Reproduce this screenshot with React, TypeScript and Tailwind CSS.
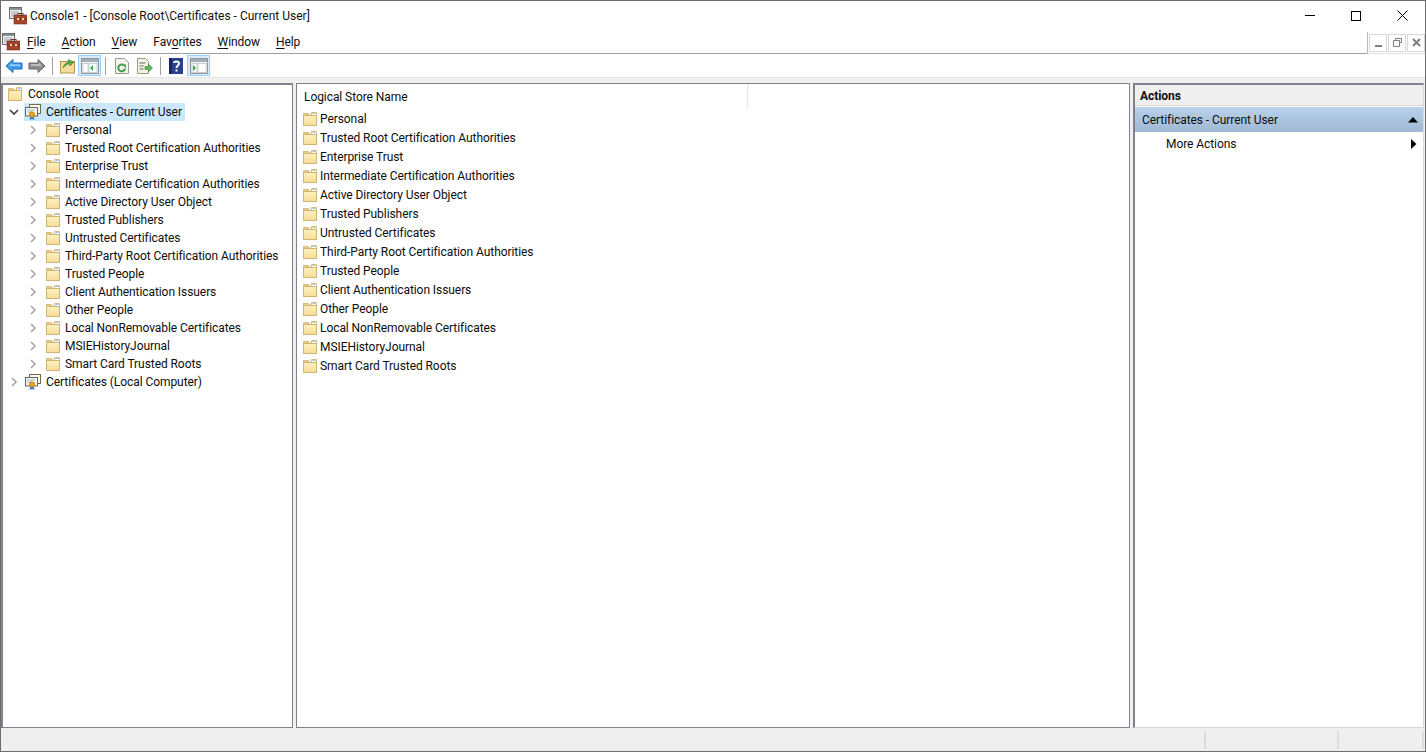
import React from 'react';

const stores = [
  'Personal',
  'Trusted Root Certification Authorities',
  'Enterprise Trust',
  'Intermediate Certification Authorities',
  'Active Directory User Object',
  'Trusted Publishers',
  'Untrusted Certificates',
  'Third-Party Root Certification Authorities',
  'Trusted People',
  'Client Authentication Issuers',
  'Other People',
  'Local NonRemovable Certificates',
  'MSIEHistoryJournal',
  'Smart Card Trusted Roots',
];

const FolderIcon = () => (
  <svg width="16" height="16" viewBox="0 0 16 16" className="shrink-0">
    <defs>
      <linearGradient id="folderBody" x1="0" y1="0" x2="0" y2="1">
        <stop offset="0" stopColor="#fdf0c4" />
        <stop offset="1" stopColor="#f6dc96" />
      </linearGradient>
    </defs>
    <path d="M1.500 4V2.500h5L7.500 4z" fill="#f4dd9f" stroke="#d8bd7c" />
    <path d="M9.500 1.500h5v3h-5z" fill="#fff" stroke="#d8bd7c" />
    <path d="M10.500 2.500h3" stroke="#9cc4e8" />
    <rect x="1.500" y="4.500" width="13" height="10" fill="url(#folderBody)" stroke="#d2b574" />
  </svg>
);

const CertIcon = () => (
  <svg width="18" height="18" viewBox="0 0 18 18" className="shrink-0">
    <rect x="5.500" y="1.500" width="11" height="9" fill="#fbfbf2" stroke="#6f6a4e" />
    <rect x="1.500" y="4.500" width="12" height="8.500" fill="#f8f8ee" stroke="#5f6468" />
    <path d="M3 7h8M3 9h5" stroke="#a8b6c2" />
    <path d="M6.500 13l-1 4 2.500-1 2.500 1-1-4z" fill="#2f7fd4" />
    <circle cx="8" cy="11.500" r="2.700" fill="#eda322" stroke="#b4720f" strokeWidth="0.7" />
  </svg>
);

const Chevron = ({ open = false }: { open?: boolean }) => (
  <svg width="10" height="10" viewBox="0 0 10 10" className="shrink-0">
    {open ? (
      <path d="M1 3l4 4 4-4" fill="none" stroke="#404040" strokeWidth="1.6" />
    ) : (
      <path d="M3 1l4 4-4 4" fill="none" stroke="#a6a6a6" strokeWidth="1.6" />
    )}
  </svg>
);

const ConsoleIcon = () => (
  <svg width="18" height="18" viewBox="0 0 18 18" className="shrink-0">
    <rect x="0.500" y="0.500" width="12" height="11" fill="#eef0f2" stroke="#6a6a6a" />
    <rect x="1" y="1" width="11" height="2" fill="#8a8f96" />
    <path d="M2 5h8M2 7h8M2 9h4" stroke="#a0a6ad" />
    <rect x="5" y="8" width="13" height="9" fill="#a8432a" stroke="#70301f" strokeWidth="0.6" />
    <rect x="9" y="6.500" width="5" height="2" fill="none" stroke="#70301f" />
    <path d="M5 12h13" stroke="#70301f" />
    <path d="M8 11h2v2H8zM13 11h2v2h-2z" fill="#f0d8b0" />
  </svg>
);

const BackIcon = () => (
  <svg width="18" height="16" viewBox="0 0 18 16">
    <path d="M1 8l7-6.500V5h9v6H8v3.500z" fill="#3d9bea" stroke="#1f6fc0" />
    <path d="M4 8l3-3v1.500h8V8z" fill="#9ed2f8" />
  </svg>
);

const ForwardIcon = () => (
  <svg width="18" height="16" viewBox="0 0 18 16">
    <path d="M17 8l-7-6.500V5H1v6h9v3.500z" fill="#8c8c8c" stroke="#666" />
    <path d="M3 6h8V4.500L14 8H3z" fill="#bdbdbd" />
  </svg>
);

const UpIcon = () => (
  <svg width="16" height="16" viewBox="0 0 16 16">
    <rect x="0.500" y="3.500" width="14" height="11.500" fill="#f4dc9c" stroke="#b39450" />
    <path d="M3 10C4 6 7 4 9 4L8 1.500l6 2.500-4 4-.5-2.500C7 6 5 8 3 10z" fill="#5aa84a" stroke="#3c7e34" strokeWidth="0.6" />
  </svg>
);

const PaneIcon = ({ right = false }: { right?: boolean }) => (
  <svg width="18" height="16" viewBox="0 0 18 16">
    <rect x="0.500" y="0.500" width="17" height="15" fill="#f4f6f8" stroke="#8f98a0" />
    <rect x="1" y="1" width="16" height="3" fill="#a3adb6" />
    <rect x="2" y="5.500" width="5" height="9" fill="#fff" stroke="#b4bac0" strokeWidth="0.7" />
    <rect x="8" y="5.500" width="8" height="9" fill="#fff" stroke="#b4bac0" strokeWidth="0.7" />
    {right ? <path d="M3 7l3 3-3 3z" fill="#3aa545" /> : <path d="M12 7l-3 3 3 3z" fill="#3aa545" />}
  </svg>
);

const RefreshIcon = () => (
  <svg width="14" height="16" viewBox="0 0 14 16">
    <path d="M.5.5h9l4 4v11H.5z" fill="#f4f4ee" stroke="#9a9a90" />
    <path d="M10 10.500a3.400 3.400 0 1 1-1-3" fill="none" stroke="#3fa04a" strokeWidth="2" />
    <path d="M7.500 6.500h3.500V10z" fill="#3fa04a" />
  </svg>
);

const ExportIcon = () => (
  <svg width="16" height="16" viewBox="0 0 16 16">
    <path d="M.5.5h8l3 3v12H.5z" fill="#f5f3df" stroke="#9a9a80" />
    <path d="M2.500 5h6M2.500 8h4M2.500 11h4" stroke="#666" />
    <path d="M8 8.500h3.500V6l4 4-4 4v-2.500H8z" fill="#58b85a" stroke="#3a8c40" strokeWidth="0.6" />
  </svg>
);

const HelpIcon = () => (
  <svg width="14" height="16" viewBox="0 0 14 16">
    <rect width="14" height="16" fill="#27408f" />
    <rect width="3" height="16" fill="#18275f" />
    <path d="M5 5c0-2 5-2.500 5 .5 0 2-2.500 2-2.500 4.500" fill="none" stroke="#fff" strokeWidth="2" />
    <rect x="6.500" y="11.500" width="2" height="2" fill="#fff" />
  </svg>
);

const Sep = () => <div className="w-px h-[18px] bg-[#a0a0a0] mx-[4px]" />;

const ToggleBtn = ({ children }: { children: React.ReactNode }) => (
  <div className="w-[23px] h-[21px] flex items-center justify-center bg-[#d8ecfb] border border-[#99d1ff]">{children}</div>
);

const ToolBtn = ({ children, w = 'w-[23px]' }: { children: React.ReactNode; w?: string }) => (
  <div className={`${w} h-[21px] flex items-center justify-center`}>{children}</div>
);

const Underline = ({ c, rest }: { c: string; rest: string }) => (
  <span>
    <span className="underline underline-offset-2">{c}</span>
    {rest}
  </span>
);

export default function App() {
  return (
    <div className="w-[1426px] h-[752px] overflow-hidden flex flex-col bg-white border border-[#6d6d6d] font-['Roboto',sans-serif] text-[12px] tracking-[-0.07px] text-[#0d0d0d]">
      {/* title bar */}
      <div className="h-[29px] flex items-center shrink-0">
        <div className="ml-[8px]"><ConsoleIcon /></div>
        <span className="ml-[3px] mt-[1px] text-[#111] tracking-normal">Console1 - [Console Root\Certificates - Current User]</span>
        <div className="ml-auto flex items-center">
          <div className="w-[46px] h-[29px] flex items-center justify-center">
            <div className="w-[10px] h-px bg-black" />
          </div>
          <div className="w-[46px] h-[29px] flex items-center justify-center">
            <div className="w-[10px] h-[10px] border border-black" />
          </div>
          <div className="w-[46px] h-[29px] flex items-center justify-center">
            <svg width="11" height="11" viewBox="0 0 11 11"><path d="M.5.5l10 10M10.500.5l-10 10" stroke="#000" /></svg>
          </div>
        </div>
      </div>
      {/* menu bar */}
      <div className="h-[24px] flex items-center shrink-0 border-b border-[#a0a0a0] relative">
        <div className="ml-[1px]"><ConsoleIcon /></div>
        <div className="ml-[7px] flex gap-[16px]">
          <Underline c="F" rest="ile" />
          <Underline c="A" rest="ction" />
          <Underline c="V" rest="iew" />
          <span>Fav<span className="underline underline-offset-2">o</span>rites</span>
          <Underline c="W" rest="indow" />
          <Underline c="H" rest="elp" />
        </div>
        <div className="absolute right-0 top-[2px] h-[22px] w-[58px] bg-white border-l border-[#b8b8b8] border-b border-b-[#e0e0e0] flex items-center gap-px pl-[1px]">
          <div className="w-[18px] h-[18px] border border-[#d8d8d8] flex items-end justify-center pb-[4px]"><div className="w-[7px] h-[2px] bg-[#808080]" /></div>
          <div className="w-[18px] h-[18px] border border-[#d8d8d8] flex items-center justify-center">
            <svg width="9" height="9" viewBox="0 0 9 9"><path d="M2.500 2V.5h6v4H7M.5 2.500h6v6h-6z" fill="none" stroke="#808080" /></svg>
          </div>
          <div className="w-[18px] h-[18px] border border-[#d8d8d8] flex items-center justify-center">
            <svg width="9" height="9" viewBox="0 0 9 9"><path d="M1 1l7 7M8 1l-7 7" stroke="#808080" strokeWidth="2" /></svg>
          </div>
        </div>
      </div>
      {/* toolbar */}
      <div className="h-[23px] flex items-center shrink-0 pl-[1px]">
        <ToolBtn><BackIcon /></ToolBtn>
        <ToolBtn><ForwardIcon /></ToolBtn>
        <Sep />
        <ToolBtn w="w-[21px]"><UpIcon /></ToolBtn>
        <ToggleBtn><PaneIcon /></ToggleBtn>
        <Sep />
        <ToolBtn><RefreshIcon /></ToolBtn>
        <ToolBtn><ExportIcon /></ToolBtn>
        <Sep />
        <ToolBtn w="w-[22px]"><HelpIcon /></ToolBtn>
        <ToggleBtn><PaneIcon right /></ToggleBtn>
      </div>
      {/* panes */}
      <div className="flex-1 min-h-0 flex gap-[3px] bg-[#f0f0f0] pt-[5px] border-t border-[#e6e6e6]">
        <div className="w-[292px] bg-white border-2 border-[#82828a] border-r-[1px] border-b-[1px] shrink-0">
          <div className="h-[18px] flex items-center pl-[4px] gap-[5px]">
            <FolderIcon />
            <span>Console Root</span>
          </div>
          <div className="h-[18px] flex items-center pl-[6px]">
            <Chevron open />
            <div className="ml-[5px] h-[18px] pr-[3px] flex items-center bg-[#cce8ff]">
              <CertIcon />
              <span className="ml-[4px]">Certificates - Current User</span>
            </div>
          </div>
          {stores.map(s => (
            <div key={s} className="h-[18px] flex items-center pl-[25px]">
              <Chevron />
              <div className="ml-[7px]"><FolderIcon /></div>
              <span className="ml-[4px]">{s}</span>
            </div>
          ))}
          <div className="h-[18px] flex items-center pl-[6px]">
            <Chevron />
            <div className="ml-[5px]"><CertIcon /></div>
            <span className="ml-[4px]">Certificates (Local Computer)</span>
          </div>
        </div>
        <div className="w-[834px] bg-white border border-[#82828a] shrink-0">
          <div className="h-[25px] flex items-center">
            <div className="w-[451px] h-[25px] pl-[7px] pt-[1px] flex items-center border-r border-[#e5e5e5]">Logical Store Name</div>
          </div>
          <div>
            {stores.map(s => (
              <div key={s} className="h-[19px] flex items-center pl-[5px] gap-[2px]">
                <FolderIcon />
                <span>{s}</span>
              </div>
            ))}
          </div>
        </div>
        <div className="flex-1 bg-white border-2 border-[#82828a] border-r-[#d8d8d8] border-b-[#d8d8d8] border-r-[1px] border-b-[1px] mr-[1px] flex flex-col">
          <div className="h-[21px] pt-[1px] bg-[#efefef] flex items-center pl-[5px] font-bold border-b border-[#d8d8d8]">Actions</div>
          <div className="h-[25px] mt-px flex items-center pl-[7px] pr-[4px] bg-gradient-to-b from-[#b9d2ea] to-[#a0b8d4]">
            <span>Certificates - Current User</span>
            <svg width="10" height="6" viewBox="0 0 10 6" className="ml-auto mr-[1px]"><path d="M5 0l5 5.500H0z" fill="#000" /></svg>
          </div>
          <div className="h-[24px] flex items-center pl-[31px] pr-[6px]">
            <span>More Actions</span>
            <svg width="6" height="10" viewBox="0 0 6 10" className="ml-auto"><path d="M0 0l5.500 5L0 10z" fill="#000" /></svg>
          </div>
        </div>
      </div>
      {/* status bar */}
      <div className="h-[23px] bg-[#efefef] shrink-0 flex items-stretch justify-end border-t border-[#f0f0f0] py-[2px] pr-[1px]">
        <div className="w-[133px] border-l-2 border-[#dcdcdc]" />
        <div className="w-[87px] border-l-2 border-r-2 border-[#dcdcdc]" />
      </div>
    </div>
  );
}
